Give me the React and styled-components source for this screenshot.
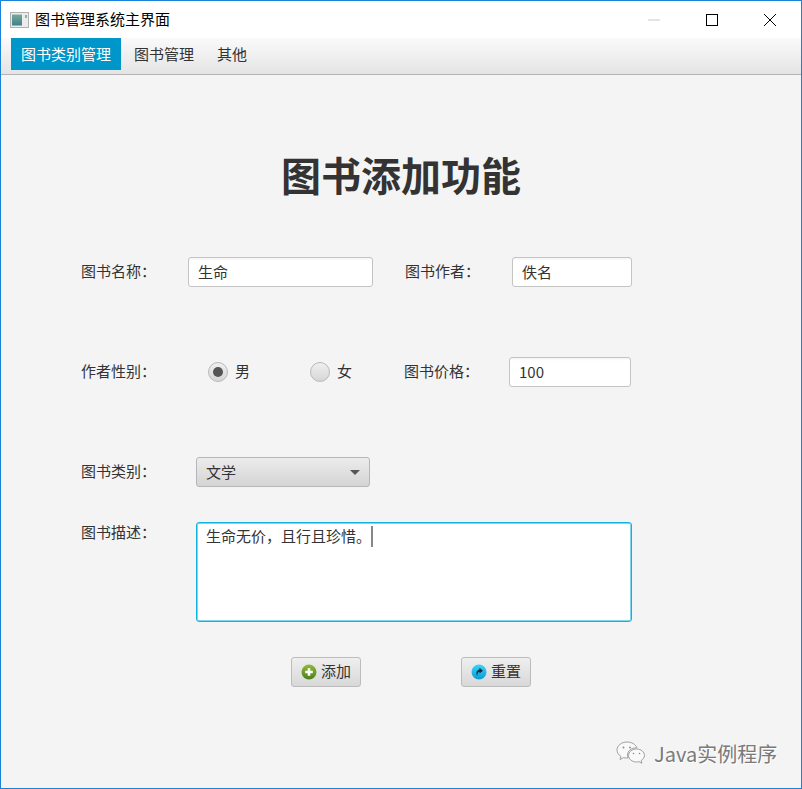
import React from 'react';
import styled, { createGlobalStyle } from 'styled-components';

const Global = createGlobalStyle`
  html, body { margin: 0; padding: 0; background: #f4f4f4; }
  * { box-sizing: border-box; }
`;
const cjk = `"Noto Sans CJK SC", "Noto Sans", sans-serif`;

const Win = styled.div`
  position: relative;
  width: 802px; height: 789px;
  border: 1px solid #1a83d9;
  background: #f4f4f4;
  font-family: ${cjk};
  font-size: 15px;
  color: #333;
  overflow: hidden;
  display: flex; flex-direction: column;
`;
const TitleBar = styled.div`
  height: 37px; background: #fff; display: flex; align-items: center; padding-left: 9px; flex: none;
`;
const AppIcon = styled.svg`width: 19px; height: 16px; flex: none; margin-right: 6px;`;
const TitleText = styled.span`font-size: 15px; color: #000; flex: 1; line-height: 20px; padding-bottom: 2px;`;
const WinBtn = styled.div`
  width: 58px; height: 37px; display: flex; align-items: center; justify-content: center; flex: none;
`;
const WinControls = styled.div`display: flex; flex: none; margin-right: 2px;`;
const MenuBar = styled.div`
  height: 37px; flex: none; display: flex; padding: 0 0 0 10px;
  background: linear-gradient(#fafafa, #e4e4e4);
  border-bottom: 1px solid #b4b4b4;
`;
const MenuItem = styled.div`
  height: 32px; padding: 0 10px 2px; margin-right: ${p => p.$gap || 0}px; display: flex; align-items: center;
  background: ${p => (p.$active ? '#0096c9' : 'transparent')};
  color: ${p => (p.$active ? '#fff' : '#333')};
`;
const Content = styled.div`
  flex: 1; display: flex; flex-direction: column; padding: 0 0 0 80px;
`;
const Heading = styled.h1`
  margin: 74px 0 4px -80px; height: 50px; line-height: 50px; text-align: center;
  font-size: 40px; font-weight: 700; color: #333; font-family: ${cjk};
`;
const Row = styled.div`
  display: flex; align-items: center; height: ${p => p.$h || 30}px; margin-top: ${p => p.$mt}px;
`;
const Label = styled.span`
  width: ${p => p.$w}px; flex: none; line-height: 20px; white-space: nowrap; color: #333; padding-bottom: 2px;
`;
const Input = styled.div`
  width: ${p => p.$w}px; height: 30px; flex: none; margin-right: ${p => p.$mr || 0}px;
  background: linear-gradient(#f4f4f4 0, #fff 3px);
  border: 1px solid #c4c4c4; border-radius: 3px;
  padding: 0 9px 2px; display: flex; align-items: center; color: #333;
`;
const RadioGroup = styled.div`
  display: flex; align-items: center; width: ${p => p.$w}px; flex: none;
`;
const RadioText = styled.span`padding-bottom: 2px; line-height: 20px;`;
const RadioMark = styled.span`
  width: 20px; height: 20px; border-radius: 50%; flex: none; margin-right: 7px;
  border: 1px solid #b8b8b8;
  background: linear-gradient(#efefef, #d6d6d6);
  display: flex; align-items: center; justify-content: center;
  &::after {
    content: ''; width: 10px; height: 10px; border-radius: 50%;
    background: ${p => (p.$on ? '#555' : 'transparent')};
  }
`;
const Select = styled.div`
  width: 174px; height: 30px; flex: none;
  background: linear-gradient(#ececec, #d4d4d4);
  border: 1px solid #b6b6b6; border-radius: 3px;
  padding: 0 9px 2px; display: flex; align-items: center; justify-content: space-between; color: #333;
`;
const Caret = styled.span`
  width: 0; height: 0; margin-top: 2px;
  border-left: 5.5px solid transparent; border-right: 5.5px solid transparent; border-top: 5px solid #555;
`;
const TextArea = styled.div`
  width: 436px; height: 100px; flex: none;
  background: #fff; border: 1px solid #0fb2e0; box-shadow: inset 0 0 0 1px #7fd6ee; border-radius: 3px;
  padding: 3px 9px; line-height: 20px; color: #333; display: flex; align-items: flex-start;
`;
const CaretBar = styled.span`
  width: 2px; height: 21px; background: #888; flex: none;
`;
const Btn = styled.div`
  width: ${p => p.$w}px; height: 30px; flex: none; margin-right: ${p => p.$mr || 0}px;
  background: linear-gradient(#efefef, #d8d8d8);
  border: 1px solid #bcbcbc; border-radius: 3px;
  display: flex; align-items: center; justify-content: center; gap: 4px; color: #333;
`;
const BtnText = styled.span`padding-bottom: 2px; line-height: 20px;`;
const TopLabelRow = styled(Row)`align-items: flex-start;`;
const ButtonRow = styled(Row)`padding-left: 210px;`;
const Watermark = styled.div`
  position: absolute; left: 615px; top: 739px; display: flex; align-items: center; gap: 6px;
  color: #7a7a7a; font-size: 20px; line-height: 28px; white-space: nowrap;
  text-shadow: 1px 1px 0 #fff;
`;

export default function App() {
  return (
    <Win>
      <Global />
      <TitleBar>
        <AppIcon viewBox="0 0 19 16">
          <rect x="0.5" y="0.5" width="18" height="15" fill="#ececec" stroke="#b0b0b0" />
          <defs>
            <linearGradient id="ai" x1="0" y1="0" x2="0" y2="1">
              <stop offset="0" stopColor="#7aa89a" />
              <stop offset="1" stopColor="#3f7f8c" />
            </linearGradient>
          </defs>
          <rect x="2" y="2.5" width="10" height="11" fill="url(#ai)" />
          <rect x="15" y="3" width="2" height="3" fill="#8fb0a8" />
        </AppIcon>
        <TitleText>图书管理系统主界面</TitleText>
        <WinControls>
          <WinBtn>
            <svg width="12" height="12" viewBox="0 0 12 12"><path d="M0 6h12" stroke="#c8c8c8" strokeWidth="1" /></svg>
          </WinBtn>
          <WinBtn>
            <svg width="12" height="12" viewBox="0 0 12 12"><rect x="0.5" y="0.5" width="11" height="11" fill="none" stroke="#000" /></svg>
          </WinBtn>
          <WinBtn>
            <svg width="12" height="12" viewBox="0 0 12 12"><path d="M0 0L12 12M12 0L0 12" stroke="#000" strokeWidth="1" /></svg>
          </WinBtn>
        </WinControls>
      </TitleBar>
      <MenuBar>
        <MenuItem $active $gap={3}>图书类别管理</MenuItem>
        <MenuItem $gap={3}>图书管理</MenuItem>
        <MenuItem>其他</MenuItem>
      </MenuBar>
      <Content>
        <Heading>图书添加功能</Heading>
        <Row $mt={54}>
          <Label $w={107}>图书名称：</Label>
          <Input $w={185} $mr={32}>生命</Input>
          <Label $w={107}>图书作者：</Label>
          <Input $w={120}>佚名</Input>
        </Row>
        <Row $mt={70}>
          <Label $w={127}>作者性别：</Label>
          <RadioGroup $w={102}><RadioMark $on /><RadioText>男</RadioText></RadioGroup>
          <RadioGroup $w={94}><RadioMark /><RadioText>女</RadioText></RadioGroup>
          <Label $w={105}>图书价格：</Label>
          <Input $w={122}>100</Input>
        </Row>
        <Row $mt={70}>
          <Label $w={115}>图书类别：</Label>
          <Select>文学<Caret /></Select>
        </Row>
        <TopLabelRow $mt={35} $h={100}>
          <Label $w={115}>图书描述：</Label>
          <TextArea>生命无价，且行且珍惜。<CaretBar /></TextArea>
        </TopLabelRow>
        <ButtonRow $mt={35}>
          <Btn $w={70} $mr={100}>
            <svg width="16" height="16" viewBox="0 0 16 16">
              <defs>
                <linearGradient id="gb" x1="0" y1="0" x2="0" y2="1">
                  <stop offset="0" stopColor="#8fbc3a" />
                  <stop offset="1" stopColor="#4c7f1c" />
                </linearGradient>
              </defs>
              <circle cx="8" cy="8" r="7.5" fill="url(#gb)" />
              <path d="M8 4.2v7.6M4.2 8h7.6" stroke="#fff" strokeWidth="2.6" />
            </svg>
            <BtnText>添加</BtnText>
          </Btn>
          <Btn $w={70}>
            <svg width="16" height="16" viewBox="0 0 16 16">
              <defs>
                <linearGradient id="bb" x1="0" y1="0" x2="0" y2="1">
                  <stop offset="0" stopColor="#3ad4f6" />
                  <stop offset="1" stopColor="#0b9bd8" />
                </linearGradient>
              </defs>
              <circle cx="8" cy="8" r="7.5" fill="url(#bb)" />
              <path d="M6.5 12C4.500 9.500 5.500 6 8.500 5.500V3.800l3.500 2.900-3.500 2.800V7.800C7 8 6.200 9.700 6.500 12z" fill="#14303f" />
            </svg>
            <BtnText>重置</BtnText>
          </Btn>
        </ButtonRow>
      </Content>
      <Watermark>
        <svg width="32" height="26" viewBox="0 0 32 26" fill="#f9f9f9" stroke="#8a8a8a" strokeWidth="0.8">
          <path d="M11 1C5.500 1 1 4.600 1 9c0 2.600 1.500 4.800 3.900 6.300L4 18.500l3.600-1.900c1 .3 2 .4 3 .4 .6 0 1 0 1.500-.1C11.700 15.800 11.500 15 11.500 14c0-4 3.800-7.200 8.800-7.200h.6C19.800 3.400 15.800 1 11 1z" />
          <path d="M20.500 8C16 8 12.500 11 12.500 14.500S16 21 20.500 21c.9 0 1.700-.1 2.500-.4l2.900 1.600-.7-2.700C27 18.300 28.500 16.500 28.500 14.500 28.500 11 25 8 20.500 8z" />
          <circle cx="7.500" cy="6.500" r="0.9" fill="#8a8a8a" stroke="none" />
          <circle cx="14" cy="6.500" r="0.9" fill="#8a8a8a" stroke="none" />
          <circle cx="17.500" cy="12.500" r="0.8" fill="#8a8a8a" stroke="none" />
          <circle cx="23.500" cy="12.500" r="0.8" fill="#8a8a8a" stroke="none" />
        </svg>
        <span>Java实例程序</span>
      </Watermark>
    </Win>
  );
}
